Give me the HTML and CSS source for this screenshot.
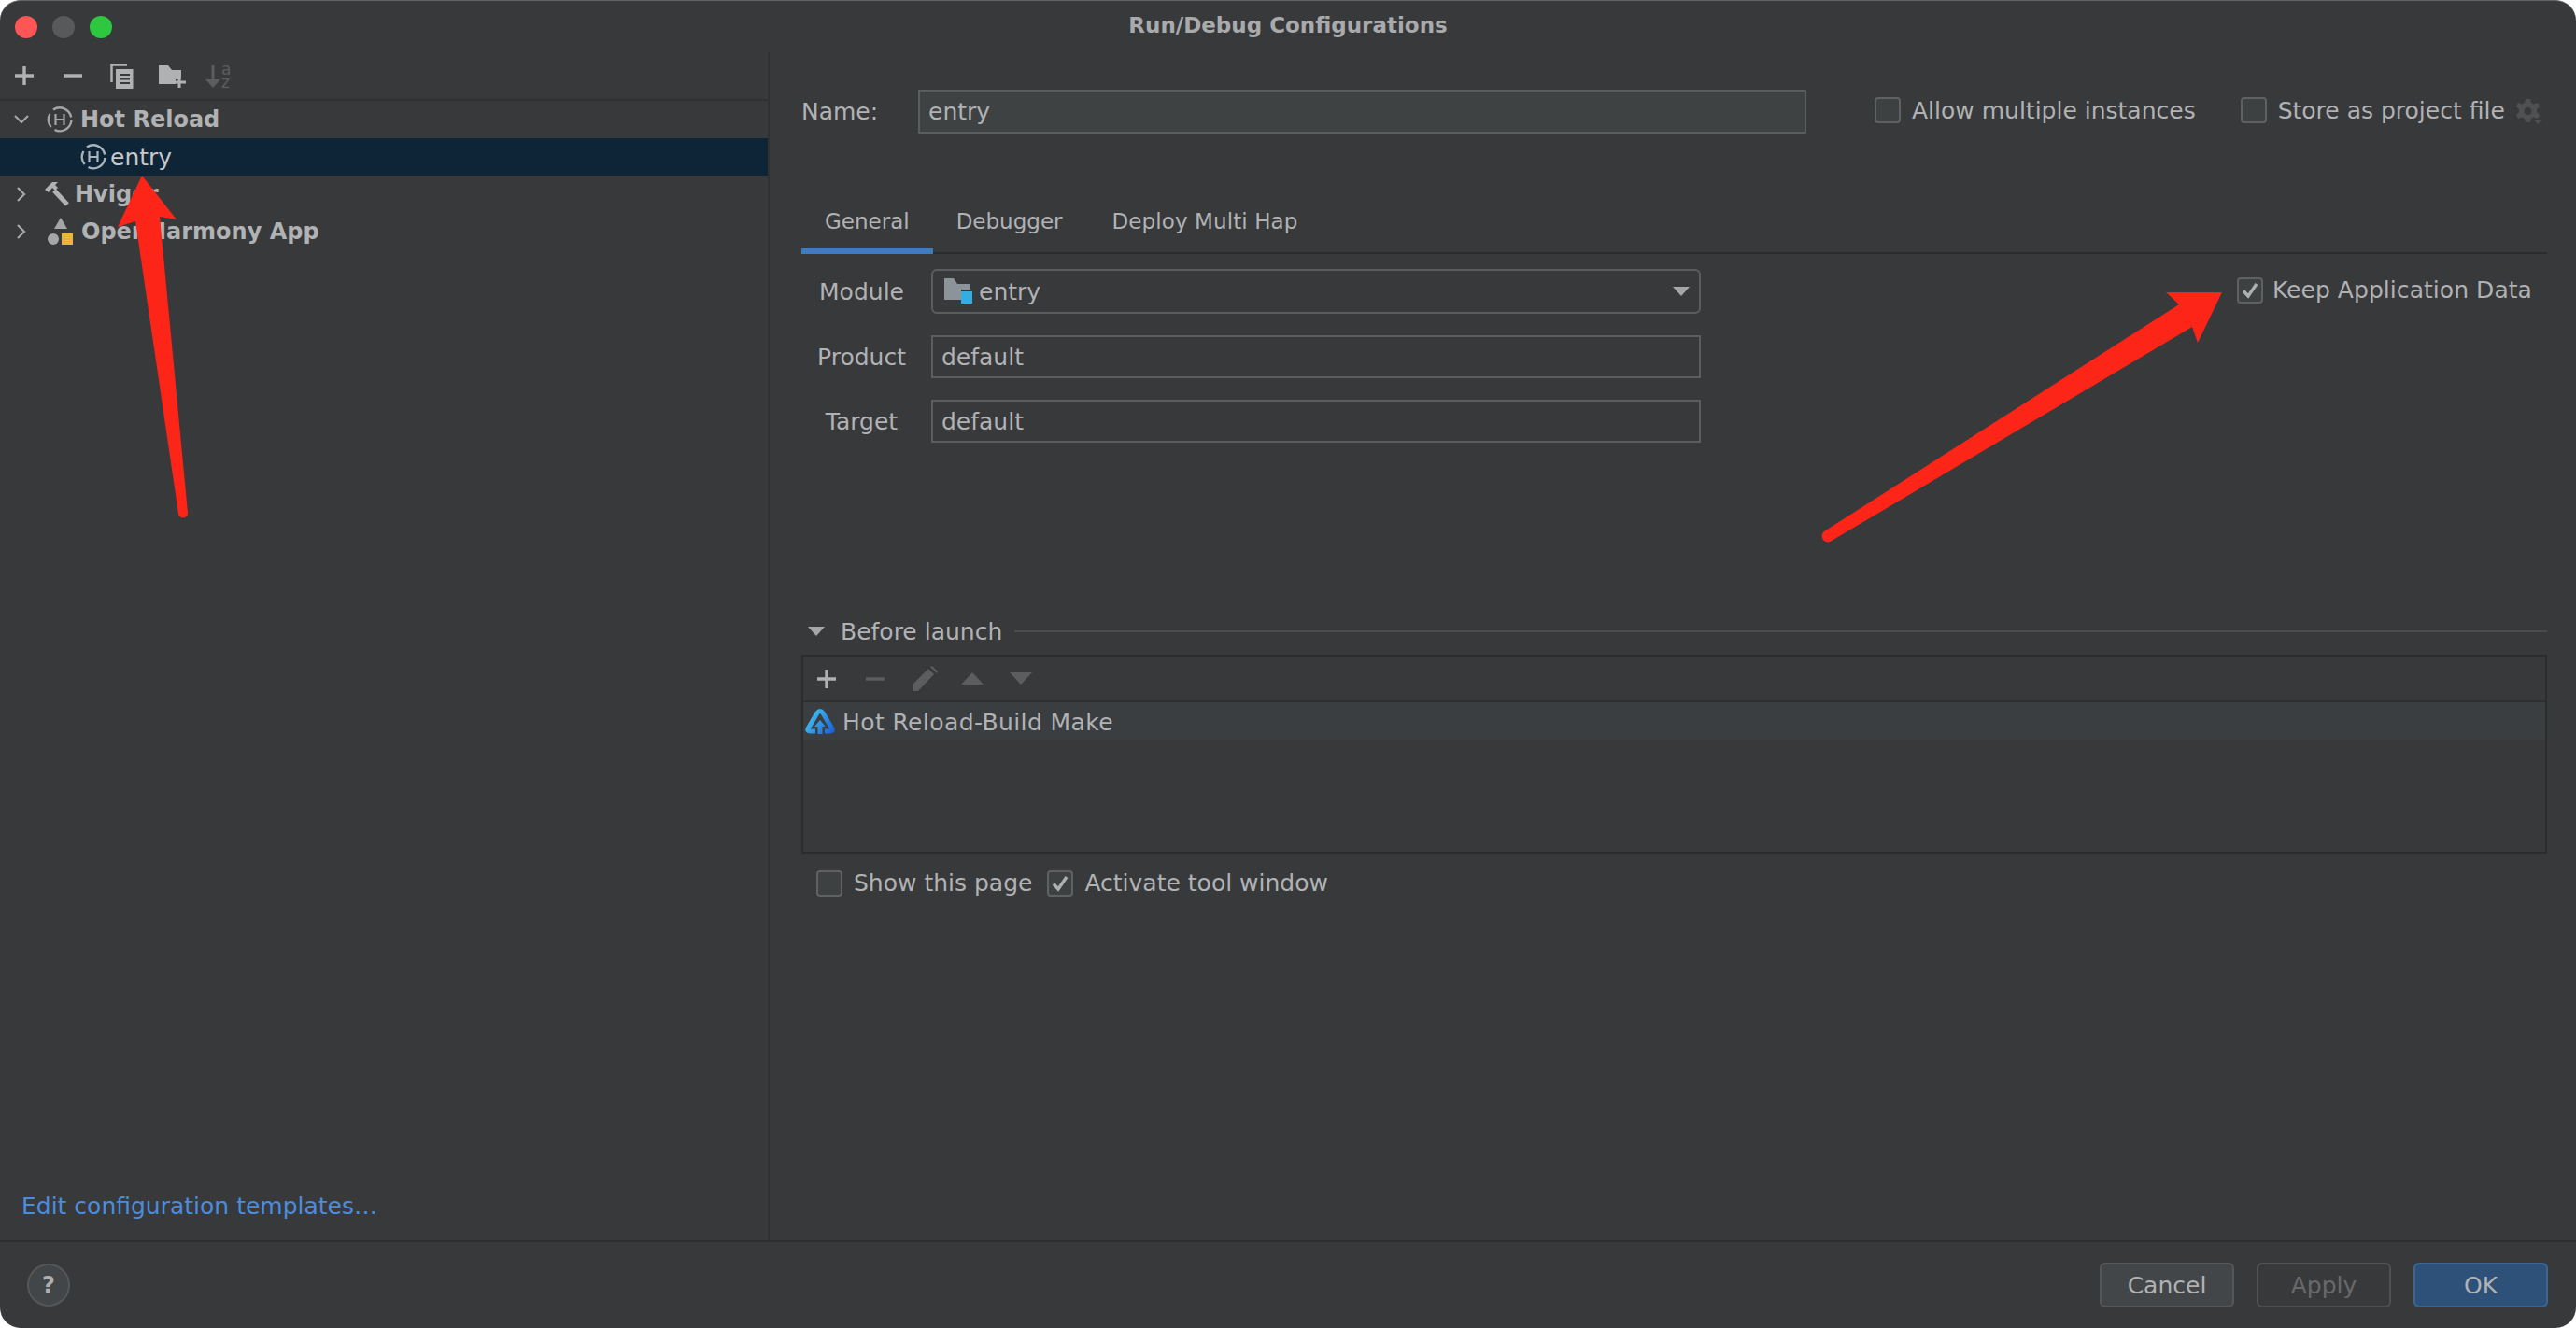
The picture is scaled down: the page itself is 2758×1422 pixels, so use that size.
FILE: index.html
```html
<!DOCTYPE html>
<html lang="en">
<head>
<meta charset="utf-8">
<title>Run/Debug Configurations</title>
<link rel="stylesheet" href="styles.css">
</head>
<body>
<svg class="defs" width="0" height="0">
  <symbol id="hot" viewBox="0 0 28 28">
    <path d="M7 3.600A12.400 12.400 0 0 1 26.200 11.500M26.400 15A12.400 12.400 0 0 1 8.500 25M4.600 22A12.400 12.400 0 0 1 3.400 8" fill="none" stroke="currentColor" stroke-width="2.400"/>
    <path d="M9.500 8v12M18.500 8v12M9.500 14h9" fill="none" stroke="currentColor" stroke-width="2.200"/>
  </symbol>
  <symbol id="check" viewBox="0 0 28 28">
    <path d="M7 14.500l5 5.500 9-13" fill="none" stroke="#aeafb0" stroke-width="3.400"/>
  </symbol>
</svg>
<div class="window">
  <header class="titlebar">
    <div class="lights"><i class="light red"></i><i class="light grey"></i><i class="light green"></i></div>
    <div class="title">Run/Debug Configurations</div>
  </header>
  <div class="content">
    <aside class="sidebar">
      <div class="side-tools">
        <svg class="ti" width="20" height="20" viewBox="0 0 20 20"><path d="M10 0v20M0 10h20" stroke="#afb1b3" stroke-width="3.400"/></svg>
        <svg class="ti" width="20" height="20" viewBox="0 0 20 20"><path d="M0 10h20" stroke="#afb1b3" stroke-width="3.400"/></svg>
        <svg class="ti" width="25" height="27" viewBox="0 0 25 27"><path d="M1.500 20V1.500H18" fill="none" stroke="#afb1b3" stroke-width="2.500"/><path d="M6 6h18.500v21H6z" fill="#afb1b3"/><path d="M10 12h11M10 16.500h11M10 21h11" stroke="#38393b" stroke-width="2"/></svg>
        <svg class="ti" width="29" height="25" viewBox="0 0 29 25"><path d="M0 1h10l4 5h10v10h-6v5H0z" fill="#afb1b3"/><path d="M22 12v13M16 19h13" stroke="#afb1b3" stroke-width="3"/></svg>
        <svg class="ti" width="30" height="36" viewBox="0 -6 30 36"><path d="M8 1v18" stroke="#5c5d5f" stroke-width="3"/><path d="M0 16h16l-8 9z" fill="#5c5d5f"/><text class="az" x="17 17" y="11 25">az</text></svg>
      </div>
      <ul class="tree">
        <li class="node">
          <svg class="chev" width="16" height="16" viewBox="0 0 16 16"><path d="M1 4l7 7 7-7" fill="none" stroke="#a5a6a8" stroke-width="2.200"/></svg>
          <svg class="node-icon hot" width="28" height="28"><use href="#hot"/></svg>
          <span class="node-label">Hot Reload</span>
        </li>
        <li class="node selected">
          <svg class="hot child-icon" width="28" height="28"><use href="#hot"/></svg>
          <span>entry</span>
        </li>
        <li class="node">
          <svg class="chev" width="16" height="16" viewBox="0 0 16 16"><path d="M4 1l7 7-7 7" fill="none" stroke="#a5a6a8" stroke-width="2.200"/></svg>
          <svg class="node-icon hammer" width="26" height="26" viewBox="0 0 26 26"><path d="M0 8L8 0h6l-3 3 3 3-3 3-3-3-4 5z" fill="#afb1b3"/><path d="M10 9l14 15" stroke="#afb1b3" stroke-width="5"/></svg>
          <span class="node-label">Hvigor</span>
        </li>
        <li class="node">
          <svg class="chev" width="16" height="16" viewBox="0 0 16 16"><path d="M4 1l7 7-7 7" fill="none" stroke="#a5a6a8" stroke-width="2.200"/></svg>
          <svg class="node-icon shapes" width="30" height="30" viewBox="0 0 30 30"><path d="M15 0l7 12H8z" fill="#a5a6a8"/><circle cx="7" cy="23" r="6" fill="#a5a6a8"/><path d="M16 17h12v12H16z" fill="#eab53e"/></svg>
          <span class="node-label">OpenHarmony App</span>
        </li>
      </ul>
      <a class="templates">Edit configuration templates…</a>
    </aside>
    <main class="main">
      <div class="name-row">
        <label class="name-label">Name:</label>
        <div class="field name-field">entry</div>
        <div class="check-item allow"><i class="box"></i><span>Allow multiple instances</span></div>
        <div class="check-item store"><i class="box"></i><span>Store as project file</span></div>
        <svg class="gear" width="28" height="28" viewBox="0 0 28 28"><path d="M11 1h5l1 4 3 1.500 4-1.500 2 4-3 3v3l3 3-2 4-4-1.500-3 1.500-1 4h-5l-1-4-3-1.500-4 1.500-2-4 3-3v-3l-3-3 2-4 4 1.500 3-1.500z" fill="#4f5052"/><circle cx="13.500" cy="14" r="4" fill="#38393b"/><path d="M20 23h8l-4 5z" fill="#4f5052"/></svg>
      </div>
      <nav class="tabs">
        <span class="tab active">General</span>
        <span class="tab">Debugger</span>
        <span class="tab">Deploy Multi Hap</span>
      </nav>
      <div class="form-area">
        <div class="form">
          <label>Module</label>
          <div class="field combo">
            <svg width="31" height="28" viewBox="0 0 31 28"><path d="M0 0h10l4 6h14v17H0z" fill="#8c9399"/><path d="M18 12h13v16H18z" fill="#38393b"/><path d="M18 14h12v13H18z" fill="#33aee0"/></svg>
            <span class="combo-text">entry</span>
            <svg class="caret" width="18" height="10" viewBox="0 0 18 10"><path d="M0 0h18L9 10z" fill="#a5a6a8"/></svg>
          </div>
          <label>Product</label>
          <div class="field">default</div>
          <label>Target</label>
          <div class="field">default</div>
        </div>
        <div class="check-item keep"><i class="box"><svg width="28" height="28"><use href="#check"/></svg></i><span>Keep Application Data</span></div>
      </div>
      <div class="section-head">
        <svg width="18" height="10" viewBox="0 0 18 10"><path d="M0 0h18L9 10z" fill="#a5a6a8"/></svg>
        <span>Before launch</span>
        <i class="rule"></i>
      </div>
      <section class="launch-box">
        <div class="launch-tools">
          <svg width="20" height="20" viewBox="0 0 20 20"><path d="M10 0v20M0 10h20" stroke="#afb1b3" stroke-width="3.400"/></svg>
          <svg width="20" height="20" viewBox="0 0 20 20"><path d="M0 10h20" stroke="#5c5d5f" stroke-width="3.400"/></svg>
          <svg width="27" height="27" viewBox="0 0 27 27"><path d="M0 27v-7L17 3l6 6-17 18zM19 1l2-1 6 6-1 2z" fill="#5c5d5f"/></svg>
          <svg width="24" height="13" viewBox="0 0 24 13"><path d="M12 0l12 13H0z" fill="#5c5d5f"/></svg>
          <svg width="24" height="13" viewBox="0 0 24 13"><path d="M0 0h24L12 13z" fill="#5c5d5f"/></svg>
        </div>
        <div class="launch-row">
          <svg class="logo" width="32" height="27" viewBox="0 0 32 27">
            <defs><linearGradient id="logo" gradientUnits="userSpaceOnUse" x1="2" y1="4" x2="30" y2="24"><stop offset="0" stop-color="#45c8ee"/><stop offset="1" stop-color="#1c62d8"/></linearGradient></defs>
            <path d="M11 24H5Q1.500 24 3.500 20.500L13 4.500Q16 0.500 19 4.500L28.500 20.500Q30.500 24 27 24H21" fill="none" stroke="url(#logo)" stroke-width="5"/>
            <path d="M16 12l6 7h-3.500v8h-5v-8H10z" fill="url(#logo)"/>
          </svg>
          <span>Hot Reload-Build Make</span>
        </div>
      </section>
      <div class="launch-checks">
        <div class="check-item"><i class="box"></i><span>Show this page</span></div>
        <div class="check-item"><i class="box"><svg width="28" height="28"><use href="#check"/></svg></i><span>Activate tool window</span></div>
      </div>
    </main>
  </div>
  <footer class="footer">
    <span class="help">?</span>
    <div class="buttons">
      <span class="btn">Cancel</span>
      <span class="btn disabled">Apply</span>
      <span class="btn primary">OK</span>
    </div>
  </footer>
  <svg class="annot" width="2758" height="1422" viewBox="0 0 2758 1422">
    <path d="M152 188L189 235 171 232 201 549A5 5 0 0 1 191 550L145 237 126 243z" fill="#fd2518"/>
    <path d="M2379 313L2353 367 2347 350 1961 579A6 6 0 0 1 1953 569L2333 326 2319 313z" fill="#fd2518"/>
  </svg>
</div>
</body>
</html>
```
FILE: styles.css
```css
* { box-sizing: border-box; }
html, body { margin: 0; padding: 0; background: #fff; height: 1422px; overflow: hidden; }
body { width: 2758px; font-family: "DejaVu Sans", sans-serif; font-size: 25px; color: #b1b2b4; }
.defs { position: absolute; }
.window { position: relative; width: 2758px; height: 1422px; background: #38393b; border-radius: 22px; overflow: hidden; display: flex; flex-direction: column; border-top: 1px solid #626365; }
.titlebar { height: 55px; flex: none; display: flex; align-items: center; position: relative; }
.lights { display: flex; gap: 16px; padding-left: 16px; }
.light { width: 24px; height: 24px; border-radius: 50%; display: block; }
.red { background: #fd5654; }
.grey { background: #58595b; }
.green { background: #2ec840; }
.title { position: absolute; left: 0; right: 0; top: 13px; text-align: center; font-weight: 700; font-size: 23px; color: #a9aaac; }
.content { flex: 1; display: flex; min-height: 0; }
.sidebar { width: 824px; flex: none; border-right: 2px solid #303133; display: flex; flex-direction: column; }
.side-tools { height: 52px; flex: none; display: flex; align-items: center; padding-left: 16px; gap: 32px; border-bottom: 2px solid #2f3032; }
.side-tools .ti:nth-child(3) { margin-left: -2px; }
.side-tools .ti:nth-child(4) { margin-left: -5px; }
.side-tools .ti:nth-child(5) { margin-left: -11px; }
.az { font-size: 17px; fill: #5c5d5f; }
.tree { list-style: none; margin: 0; padding: 0; }
.node { height: 40px; display: flex; align-items: center; position: relative; padding-left: 50px; }
.chev { position: absolute; left: 15px; top: 12px; }
.node-icon { flex: none; margin-right: 8px; }
.node-icon.shapes { margin-right: 7px; }
.hot { color: #a5a6a8; }
.node-label { font-weight: 700; font-size: 24px; }
.hammer { margin-right: 6px; margin-left: -2px; }
.selected { background: #0e2537; padding-left: 86px; color: #c6c8ca; }
.child-icon { margin-right: 4px; color: #a9b4bc; }
.templates { margin-top: auto; margin-bottom: 16px; height: 40px; line-height: 40px; padding-left: 23px; color: #4a8ddf; }
.main { flex: 1; min-width: 0; padding: 40px 31px 0 34px; }
.name-row { display: flex; align-items: center; height: 47px; position: relative; }
.name-label { width: 125px; flex: none; }
.field { height: 46px; border: 2px solid #5b5d5e; padding: 0 9px; display: flex; align-items: center; }
.name-field { width: 951px; height: 47px; flex: none; background: #3f4243; }
.check-item { display: flex; align-items: center; gap: 12px; white-space: nowrap; }
.box { width: 28px; height: 28px; border: 2px solid #5f6163; border-radius: 4px; background: #3e4142; display: block; flex: none; position: relative; }
.box svg { position: absolute; left: -2px; top: -2px; }
.allow { margin-left: 73px; margin-top: -3px; }
.store { margin-left: 48px; margin-top: -3px; }
.gear { margin-left: 11px; margin-top: -2px; }
.tabs { display: flex; height: 67px; margin-top: 62px; border-bottom: 2px solid #2b2c2e; align-items: stretch; position: relative; }
.tab { padding: 19px 25px 0; white-space: nowrap; font-size: 23px; }
.tab:nth-child(3) { margin-left: 3px; letter-spacing: .1px; }
.tab.active { position: relative; }
.tab.active::after { content: ""; position: absolute; left: 0; right: 0; bottom: -2px; height: 6px; background: #3e7cc0; }
.form-area { display: flex; justify-content: space-between; align-items: flex-start; margin-top: 16px; }
.form { display: grid; grid-template-columns: 139px 824px; row-gap: 23px; align-items: center; }
.form label { text-align: center; padding-right: 10px; }
.combo { border-radius: 6px; height: 48px; position: relative; padding-left: 12px; gap: 6px; }
.caret { position: absolute; right: 10px; top: 17px; }
.keep { margin-top: 8px; margin-right: 16px; gap: 10px; letter-spacing: .05px; }
.section-head { display: flex; align-items: center; height: 30px; margin-top: 187px; margin-left: 7px; gap: 17px; }
.rule { flex: 1; height: 2px; background: #4a4b4d; margin-left: -4px; }
.launch-box { height: 213px; border: 2px solid #2b2c2e; margin-top: 10px; }
.launch-tools { height: 49px; display: flex; align-items: center; padding-left: 15px; gap: 32px; border-bottom: 2px solid #2f3032; }
.launch-tools svg:nth-child(3) { margin-left: -2px; }
.launch-tools svg:nth-child(4) { margin-left: -7px; }
.launch-tools svg:nth-child(5) { margin-left: -4px; }
.launch-row { height: 40px; background: #3b3e40; display: flex; align-items: center; gap: 8px; padding: 2px 0 0 2px; letter-spacing: .4px; }
.logo { margin-top: -2px; }
.launch-checks { display: flex; margin-top: 17px; padding-left: 16px; gap: 16px; }
.footer { height: 94px; flex: none; border-top: 2px solid #2e2f31; display: flex; align-items: center; justify-content: space-between; padding: 0 30px 0 29px; }
.help { width: 46px; height: 46px; border-radius: 50%; border: 2px solid #555759; background: #434648; font-weight: 700; font-size: 24px; display: flex; align-items: center; justify-content: center; color: #aeafb1; }
.buttons { display: flex; gap: 24px; }
.btn { width: 144px; height: 48px; border: 2px solid #555759; border-radius: 6px; background: #434648; display: flex; align-items: center; justify-content: center; }
.btn.disabled { background: transparent; color: #68696b; border-color: #505153; }
.btn.primary { background: #2d5179; border-color: #3d6690; }
.annot { position: absolute; left: 0; top: -1px; pointer-events: none; }
```
